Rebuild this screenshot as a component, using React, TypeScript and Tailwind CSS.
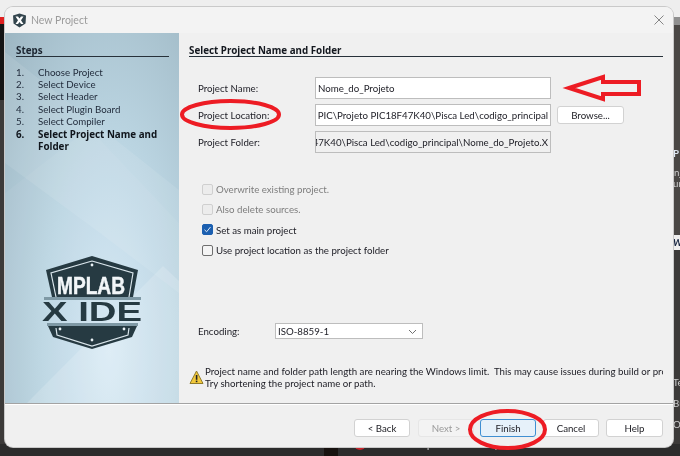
import React from "react";

const steps = ["Choose Project", "Select Device", "Select Header", "Select Plugin Board", "Select Compiler"];
const boldFont = "font-['Noto_Sans',sans-serif] font-bold text-[9.8px]";

function AppIcon() {
  return (
    <svg width="15" height="15" viewBox="0 0 15 15">
      <path d="M7.5 0.5 L14 2.5 L13.5 10.5 L7.5 14.5 L1.5 10.5 L1 2.5 Z" fill="#33454d" />
      <path d="M3.5 3.5 H6 L7.5 5.6 L9 3.5 H11.5 L9 7.3 L11.5 11 H9 L7.5 9 L6 11 H3.5 L6 7.3 Z" fill="#ffffff" />
    </svg>
  );
}

function Logo() {
  return (
    <svg width="110" height="100" viewBox="0 0 110 100">
      <path d="M52 0 L98 14 L93 41 H12 L6 14 Z" fill="#263a42" />
      <path d="M52 5 L93 17 L89 41 M16 41 L11 17 L52 5" fill="none" stroke="#d8e4ea" strokeWidth="1.2" />
      <circle cx="52" cy="9" r="1.4" fill="#e8f0f4" />
      <text x="17" y="38" fontFamily="Liberation Sans, sans-serif" fontWeight="700" fontSize="24" fill="#f2f6f8" stroke="#f2f6f8" strokeWidth="0.5" textLength="68" lengthAdjust="spacingAndGlyphs">MPLAB</text>
      <rect x="4" y="41" width="97" height="3" fill="#7f99a5" />
      <text x="2" y="65" fontFamily="Liberation Sans, sans-serif" fontWeight="700" fontSize="27" fill="#263a42" textLength="100" lengthAdjust="spacingAndGlyphs">X IDE</text>
      <rect x="7" y="67" width="91" height="3" fill="#7f99a5" />
      <path d="M8 70 H97 L92 81 L52 93 L13 81 Z" fill="#263a42" />
      <path d="M16 72 L17 79 L52 90 L88 79 L89 72" fill="none" stroke="#d8e4ea" strokeWidth="1.2" />
      <circle cx="20" cy="73" r="1.4" fill="#e8f0f4" />
      <circle cx="84" cy="73" r="1.4" fill="#e8f0f4" />
      <circle cx="52" cy="84" r="1.4" fill="#e8f0f4" />
    </svg>
  );
}

function Check({ label, disabled, checked }: { label: string; disabled?: boolean; checked?: boolean }) {
  return (
    <div className={`flex items-center gap-[3px] h-[20.3px] ${disabled ? "text-[#7d7d7d]" : "text-[#1c1c24]"}`}>
      <span
        className={`w-[11px] h-[11px] rounded-[2px] border flex items-center justify-center ${
          checked ? "bg-[#1b5fb0] border-[#1b5fb0]" : disabled ? "bg-[#ececec] border-[#cfcfcf]" : "bg-[#f4f4f4] border-[#6f6f6f]"
        }`}
      >
        {checked && (
          <svg width="9" height="9" viewBox="0 0 9 9">
            <path d="M1.5 4.8 L3.6 6.8 L7.5 2" fill="none" stroke="#dfeaf6" strokeWidth="1" />
          </svg>
        )}
      </span>
      <span>{label}</span>
    </div>
  );
}

function Btn({ label, w, variant }: { label: string; w: string; variant?: "disabled" | "primary" }) {
  const cls =
    variant === "primary"
      ? "bg-[#e6f1fa] border-[#3f8fd2] text-[#1c1c22]"
      : variant === "disabled"
      ? "bg-[#f3f3f3] border-[#e6e6e6] text-[#9a9a9a]"
      : "bg-white border-[#d2d2d2] text-[#1c1c22]";
  return (
    <div className={`h-[18px] ${w} rounded-[3px] border flex items-center justify-center ${cls}`}>{label}</div>
  );
}

function Field({ label, value, readOnly, right }: { label: string; value: string; readOnly?: boolean; right?: boolean }) {
  return (
    <div className="flex items-center h-[22px]">
      <div className="w-[126px] pl-[9px] text-[#1c1c24]">{label}</div>
      <div
        className={`w-[236px] h-[22px] border border-[#bdbdbd] flex items-center overflow-hidden whitespace-nowrap px-[2px] text-[#1c1c24] ${
          readOnly ? "bg-[#f0f0f0]" : "bg-white"
        } ${right ? "justify-end" : ""}`}
      >
        <span className="shrink-0">{value}</span>
      </div>
    </div>
  );
}

export default function App() {
  return (
    <div className="relative w-[680px] h-[456px] overflow-hidden bg-[#3c3a39] font-['Lato',sans-serif] text-[9.7px] leading-[12px] blur-[0.3px]">
      {/* desktop behind the dialog */}
      <div className="absolute left-0 top-0 w-full h-[17px] bg-[#eeeeee]" />
      <div className="absolute left-0 top-[17px] w-[5px] h-[7px] bg-[#e02020]" />
      <div className="absolute left-0 top-[24px] w-[5px] h-[76px] bg-[#141414]" />
      <div className="absolute right-0 top-[17px] w-[7px] h-[8px] bg-[#8f8f8f]" />
      <div className="absolute right-0 top-[25px] w-[7px] h-[210px] bg-[#4a4745]" />
      <div className="absolute right-0 top-[235px] w-[7px] h-[15px] bg-[#eeeeee]" />
      <div className="absolute left-[673px] top-[147px] text-[#dfe8f2] font-bold">P</div>
      <div className="absolute left-[674px] top-[166px] text-[#cfcfcf]">nj</div>
      <div className="absolute left-[673px] top-[177px] text-[#cfcfcf]">ur</div>
      <div className="absolute left-[673px] top-[236px] text-[#15233f] font-bold italic">W</div>
      <div className="absolute left-[673px] top-[376px] text-[#d0d0d0]">Te</div>
      <div className="absolute left-[673px] top-[397px] text-[#d0d0d0]">Bu</div>
      <div className="absolute left-[673px] top-[418px] text-[#d0d0d0]">Op</div>
      <div className="absolute left-0 bottom-0 w-full h-[12px] bg-[#2c2c2c]" />
      <div className="absolute left-[324px] bottom-0 w-[14px] h-[12px] bg-[#17120f]" />
      <div className="absolute left-[354px] top-[438px] w-[12px] h-[12px] rounded-full bg-[#c8242b]" />
      <div className="absolute left-[373px] top-[436px] text-[#a8a8a8] text-[14px] leading-[14px] whitespace-nowrap">Microchip University</div>

      {/* dialog window */}
      <div className="absolute left-[5px] top-[7px] w-[668px] h-[440px] bg-[#f0f0f0] rounded-[8px] overflow-hidden flex flex-col shadow-[0_0_0_1px_#c9c9c9]">
        <div className="h-[26px] shrink-0 flex items-center bg-[#f3f3f3] pl-[7px] pr-[9px]">
          <AppIcon />
          <span className="ml-[4px] text-[#9b9b9b] text-[10.5px]">New Project</span>
          <svg className="ml-auto" width="10" height="10" viewBox="0 0 10 10">
            <path d="M0.5 0.5 L9.5 9.5 M9.5 0.5 L0.5 9.5" stroke="#858585" strokeWidth="1" />
          </svg>
        </div>

        <div className="h-[370px] shrink-0 flex">
          <aside className="relative w-[174px] shrink-0 overflow-hidden bg-[radial-gradient(ellipse_at_60%_85%,#d6e9f5_0%,#bcd6e3_45%,#9db6c2_100%)] pt-[11px] px-[11px] text-[#1e2838]">
            <svg className="absolute left-0 top-0" width="174" height="370" viewBox="0 0 174 370">
              <polygon points="0,19 174,157 174,260 95,200 0,130" fill="#ffffff" opacity="0.09" />
              <polygon points="0,160 84,95 174,190 174,370 0,370" fill="#ffffff" opacity="0.05" />
              <polygon points="22,370 158,233 174,248 174,370" fill="#ffffff" opacity="0.16" />
            </svg>
            <div className="relative">
              <div className={`${boldFont} text-[#1c2530] border-b border-[#27313a] h-[13px] leading-[14px] w-[153px]`}>Steps</div>
              <ol className="mt-[9px]">
                {steps.map((s, i) => (
                  <li key={s} className="flex h-[12.2px] leading-[12.2px]">
                    <span className="w-[22px] shrink-0">{i + 1}.</span>
                    <span>{s}</span>
                  </li>
                ))}
                <li className={`flex mt-[2px] leading-[12.2px] ${boldFont} text-[#10151c]`}>
                  <span className="w-[22px] shrink-0">6.</span>
                  <span className="w-[125px]">Select Project Name and Folder</span>
                </li>
              </ol>
            </div>
            <div className="absolute left-[35px] top-[223px]">
              <Logo />
            </div>
          </aside>

          <main className="flex-1 min-w-0 pt-[11px] pl-[10px] pr-[10px] overflow-hidden">
            <div className={`${boldFont} text-[#14181f] border-b border-[#27313a] h-[13px] leading-[14px]`}>Select Project Name and Folder</div>
            <div className="mt-[20px] flex flex-col gap-[5px]">
              <Field label="Project Name:" value="Nome_do_Projeto" />
              <div className="flex items-center">
                <Field label="Project Location:" value="o PIC\Projeto PIC18F47K40\Pisca Led\codigo_principal" right />
                <div className="ml-[6px]">
                  <Btn label="Browse..." w="w-[67px]" />
                </div>
              </div>
              <Field label="Project Folder:" value="=47K40\Pisca Led\codigo_principal\Nome_do_Projeto.X" readOnly right />
            </div>

            <div className="mt-[26px] pl-[13px]">
              <Check label="Overwrite existing project." disabled />
              <Check label="Also delete sources." disabled />
              <Check label="Set as main project" checked />
              <Check label="Use project location as the project folder" />
            </div>

            <div className="mt-[63px] flex items-center">
              <div className="w-[86px] pl-[9px] text-[#1c1c24]">Encoding:</div>
              <div className="w-[148px] h-[16px] bg-white border border-[#bdbdbd] flex items-center justify-between px-[2px] text-[#1c1c24]">
                <span>ISO-8859-1</span>
                <svg width="9" height="6" viewBox="0 0 9 6" className="mr-[3px] mt-[2px]">
                  <path d="M1 1 L4.5 4.5 L8 1" fill="none" stroke="#6f6f6f" strokeWidth="1" />
                </svg>
              </div>
            </div>

            <div className="mt-[26px] flex text-[#1c1c24]">
              <svg width="15" height="15" viewBox="0 0 15 15" className="shrink-0 mt-[5px] mr-[1px]">
                <path d="M7.5 1 L14 13.5 H1 Z" fill="#f2c83a" stroke="#8f7a2a" strokeWidth="1" strokeLinejoin="round" />
                <rect x="6.8" y="5" width="1.6" height="4.8" fill="#222" />
                <rect x="6.8" y="10.6" width="1.6" height="1.6" fill="#222" />
              </svg>
              <div className="whitespace-nowrap overflow-hidden flex-1 min-w-0">
                <div>Project name and folder path length are nearing the Windows limit.&nbsp; This may cause issues during build or pro</div>
                <div>Try shortening the project name or path.</div>
              </div>
            </div>
          </main>
        </div>

        <div className="h-[2px] shrink-0 bg-[#a3a3a3] border-b border-white" />

        <footer className="flex-1 flex justify-end pt-[14px] pr-[10px]">
          <Btn label="< Back" w="w-[56px]" />
          <div className="ml-[8px]"><Btn label="Next >" w="w-[56px]" variant="disabled" /></div>
          <div className="ml-[6px]"><Btn label="Finish" w="w-[56px]" variant="primary" /></div>
          <div className="ml-[7px]"><Btn label="Cancel" w="w-[56px]" /></div>
          <div className="ml-[7px]"><Btn label="Help" w="w-[57px]" /></div>
        </footer>
      </div>

      {/* red hand-drawn annotations */}
      <svg className="absolute left-0 top-0 pointer-events-none" width="680" height="456" viewBox="0 0 680 456">
        <ellipse cx="230.5" cy="114.5" rx="48.5" ry="13.5" fill="none" stroke="#ed1c24" strokeWidth="4" />
        <ellipse cx="507.5" cy="429.5" rx="37.5" ry="18.5" fill="none" stroke="#ed1c24" strokeWidth="4" />
        <path d="M569 88 L603 77 V82 H639 V94 H603 V99 Z" fill="none" stroke="#ed1c24" strokeWidth="4" />
      </svg>
    </div>
  );
}
